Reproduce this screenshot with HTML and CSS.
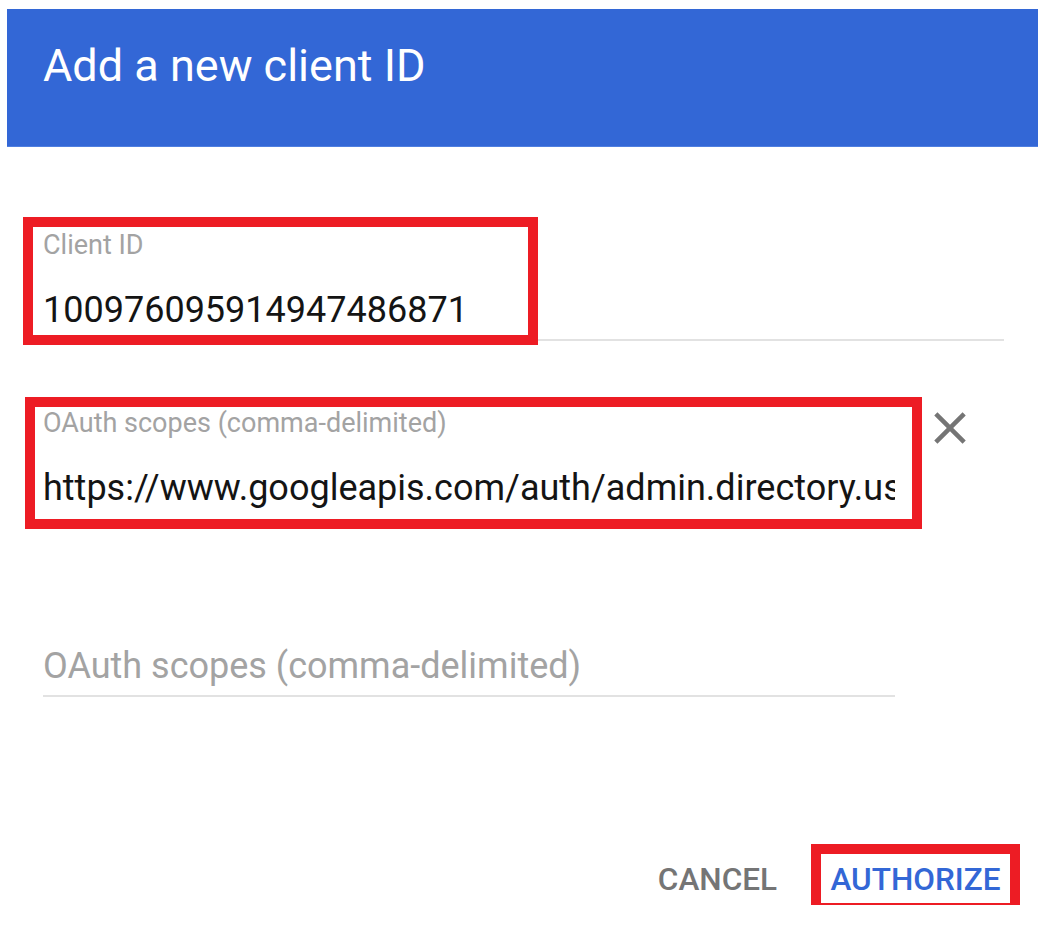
FILE: index.html
```html
<!DOCTYPE html>
<html lang="en">
<head>
  <meta charset="UTF-8">
  <meta name="viewport" content="width=device-width, initial-scale=1.0">
  <title>Add a new client ID</title>
  <link rel="stylesheet" href="styles.css">
</head>
<body>
  <div class="dialog">
    <div class="dialog-header">
      <h1 class="dialog-title">Add a new client ID</h1>
    </div>

    <div class="dialog-body">
      <div class="field field-wide">
        <label class="field-label" for="client-id">Client ID</label>
        <input id="client-id" class="field-input" type="text" value="100976095914947486871">
        <div class="mark mark-client"></div>
      </div>

      <div class="field-row">
        <div class="field field-narrow">
          <label class="field-label" for="scope-1">OAuth scopes (comma-delimited)</label>
          <input id="scope-1" class="field-input no-line" type="text" value="https://www.googleapis.com/auth/admin.directory.user">
          <div class="mark mark-scope"></div>
        </div>
        <button class="clear-btn" title="Remove">
          <svg viewBox="0 0 24 24" width="54" height="54">
            <path d="M19 6.41L17.59 5 12 10.59 6.41 5 5 6.41 10.59 12 5 17.59 6.41 19 12 13.41 17.59 19 19 17.59 13.41 12z"/>
          </svg>
        </button>
      </div>

      <div class="field field-narrow">
        <label class="field-label" for="scope-2"></label>
        <input id="scope-2" class="field-input" type="text" placeholder="OAuth scopes (comma-delimited)">
      </div>
    </div>

    <div class="dialog-actions">
      <button class="action-btn cancel">CANCEL</button>
      <button class="action-btn authorize">AUTHORIZE</button>
    </div>
  </div>
</body>
</html>
```

FILE: styles.css
```css
body {
  margin: 0;
  background-color: white;
  font-family: Roboto, "Liberation Sans", sans-serif;
}
.dialog {
  width: 1031px;
  margin: 9px 0 0 7px;
}
.dialog-header {
  height: 138px;
  padding: 30px 36px 0;
  box-sizing: border-box;
  background-color: #3367d6;
  border-bottom: 1px solid #4f7fe0;
}
.dialog-title {
  margin: 0;
  color: white;
  font-size: 45px;
  font-weight: 400;
  line-height: 54px;
}
.dialog-body {
  padding: 82px 34px 0 36px;
}
.field {
  position: relative;
  margin-bottom: 66px;
}
.field-narrow {
  width: 852px;
}
.field-label {
  display: block;
  height: 32px;
  font-size: 27px;
  line-height: 32px;
  color: #a3a3a3;
}
.field-input {
  display: block;
  width: 100%;
  height: 53px;
  margin-top: 27px;
  padding: 0 0 7px;
  box-sizing: border-box;
  border: none;
  border-bottom: 2px solid #e2e2e2;
  outline: none;
  font-family: inherit;
  font-size: 36px;
  line-height: 44px;
  color: #141414;
  background: transparent;
}
.field-input.no-line {
  border-bottom-color: transparent;
}
.field-input::placeholder {
  color: #a3a3a3;
}
.field-row {
  display: flex;
  align-items: flex-start;
}
.clear-btn {
  width: 54px;
  height: 54px;
  margin: -6px 0 0 28px;
  padding: 0;
  border: none;
  background: none;
  fill: #757575;
  cursor: pointer;
}
.clear-btn svg {
  display: block;
}

/* red highlight boxes */
.mark {
  position: absolute;
  border: 10px solid #ed1c24;
  pointer-events: none;
}
.mark-client {
  left: -20px;
  top: -12px;
  width: 495px;
  height: 108px;
}
.mark-scope {
  left: -18px;
  top: -10px;
  width: 877px;
  height: 112px;
}

.dialog-actions {
  display: flex;
  justify-content: flex-end;
  gap: 35px;
  padding: 91px 28px 0 0;
}
.action-btn {
  height: 51px;
  padding: 0 9px;
  border: none;
  background: none;
  font-family: inherit;
  font-size: 31.5px;
  font-weight: 500;
  line-height: 51px;
  cursor: pointer;
}
.action-btn.cancel {
  color: #757575;
}
.action-btn.authorize {
  position: relative;
  width: 189px;
  color: #3367d6;
  border-bottom: 2px solid #5cc27a;
}
.action-btn.authorize:after {
  content: '';
  position: absolute;
  inset: -10px;
  border: 10px solid #ed1c24;
}
```
